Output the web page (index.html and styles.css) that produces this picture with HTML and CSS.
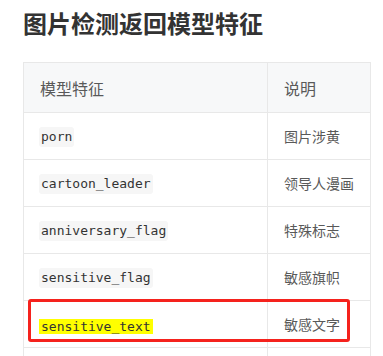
FILE: index.html
```html
<!DOCTYPE html>
<html lang="zh-CN">
<head>
    <meta charset="UTF-8">
    <meta name="viewport" content="width=device-width, initial-scale=1.0">
    <title>图片检测返回模型特征</title>
    <link rel="stylesheet" href="styles.css">
</head>
<body>
    <h2 class="title">图片检测返回模型特征</h2>
    <div class="table-wrap">
        <table class="feature-table">
            <thead>
                <tr>
                    <th class="col-key">模型特征</th>
                    <th class="col-desc">说明</th>
                </tr>
            </thead>
            <tbody>
                <tr>
                    <td><code>porn</code></td>
                    <td>图片涉黄</td>
                </tr>
                <tr>
                    <td><code>cartoon_leader</code></td>
                    <td>领导人漫画</td>
                </tr>
                <tr>
                    <td><code>anniversary_flag</code></td>
                    <td>特殊标志</td>
                </tr>
                <tr>
                    <td><code>sensitive_flag</code></td>
                    <td>敏感旗帜</td>
                </tr>
                <tr>
                    <td><code class="hl">sensitive_text</code></td>
                    <td>敏感文字</td>
                </tr>
                <tr>
                    <td></td>
                    <td></td>
                </tr>
            </tbody>
        </table>
        <!-- annotation box around the sensitive_text row -->
        <div class="note-box"></div>
    </div>
</body>
</html>
```

FILE: styles.css
```css
body {
    margin: 0;
    padding: 0 0 0 23px;
    background-color: #ffffff;
    font-family: "Noto Sans CJK SC", "Noto Sans", sans-serif;
    color: #595959;
}
.title {
    margin: 0;
    padding-top: 6px;
    font-size: 24px;
    line-height: 34px;
    font-weight: 700;
    color: #333333;
}
.table-wrap {
    position: relative;
    margin-top: 22px;
    width: 348px;
}
.feature-table {
    width: 348px;
    border-collapse: collapse;
    table-layout: fixed;
}
.feature-table th,
.feature-table td {
    border: 1px solid #e8e8e8;
    padding: 0 16px;
    text-align: left;
    vertical-align: middle;
    box-sizing: border-box;
}
.feature-table th {
    background-color: #f7f8f9;
    font-weight: 400;
    font-size: 16px;
    line-height: 20px;
    height: 50px;
}
.feature-table td {
    font-size: 14px;
    line-height: 20px;
    height: 47px;
}
.col-key {
    width: 244px;
}
code {
    font-family: "DejaVu Sans Mono", "Liberation Mono", monospace;
    font-size: 13px;
    line-height: 20px;
    display: inline-block;
    vertical-align: middle;
    padding: 0 2px;
    margin-left: -1px;
    background-color: #f6f6f6;
    border-radius: 3px;
    color: #333333;
}
code.hl {
    background-color: #ffff00;
    line-height: 15px;
    border-radius: 0;
}
.note-box {
    position: absolute;
    left: 5px;
    top: 237px;
    width: 316px;
    height: 37px;
    border: 3px solid #f5221d;
    border-radius: 3px;
}
```
